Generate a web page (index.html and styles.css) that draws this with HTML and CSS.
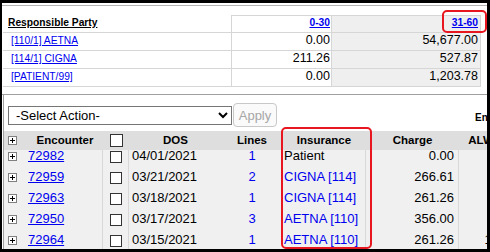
FILE: index.html
```html
<!DOCTYPE html>
<html lang="en">
<head>
  <meta charset="UTF-8">
  <meta name="viewport" content="width=device-width, initial-scale=1.0">
  <title>Encounters - Aging</title>
  <link rel="stylesheet" href="styles.css">
</head>
<body>
  <div class="window">
    <!-- aging summary -->
    <div class="aging">
      <table class="aging-table">
        <colgroup>
          <col class="c-party">
          <col class="c-amt">
          <col class="c-amt2">
        </colgroup>
        <tr>
          <th class="party"><a class="head-link" href="#">Responsible Party</a></th>
          <th class="num"><a class="range" href="#">0-30</a></th>
          <th class="num shade"><a class="range" href="#">31-60</a></th>
        </tr>
        <tr>
          <td class="party"><a href="#">[110/1] AETNA</a></td>
          <td class="num">0.00</td>
          <td class="num shade">54,677.00</td>
        </tr>
        <tr>
          <td class="party"><a href="#">[114/1] CIGNA</a></td>
          <td class="num">211.26</td>
          <td class="num shade">527.87</td>
        </tr>
        <tr>
          <td class="party"><a href="#">[PATIENT/99]</a></td>
          <td class="num">0.00</td>
          <td class="num shade">1,203.78</td>
        </tr>
      </table>
    </div>

    <div class="claims">
      <div class="toolbar">
        <select class="action">
          <option>-Select Action-</option>
        </select>
        <button class="btn" disabled>Apply</button>
        <span class="count">Encounters: 5</span>
      </div>

      <div class="grid">
        <table class="grid-table grid-head">
          <colgroup>
            <col class="g-exp"><col class="g-enc"><col class="g-chk"><col class="g-dos">
            <col class="g-lines"><col class="g-ins"><col class="g-chg"><col class="g-alw">
          </colgroup>
          <tr>
            <th><svg class="plus" width="9" height="9" viewBox="0 0 9 9"><rect x="0.5" y="0.5" width="8" height="8" fill="#fff" stroke="#808080"/><path d="M2 4.5h5M4.5 2v5" stroke="#000"/></svg></th>
            <th>Encounter</th>
            <th><span class="check big"></span></th>
            <th>DOS</th>
            <th>Lines</th>
            <th>Insurance</th>
            <th>Charge</th>
            <th>ALW</th>
          </tr>
        </table>

        <div class="grid-body">
          <table class="grid-table" id="rows">
            <colgroup>
              <col class="g-exp"><col class="g-enc"><col class="g-chk"><col class="g-dos">
              <col class="g-lines"><col class="g-ins"><col class="g-chg"><col class="g-alw">
            </colgroup>
          </table>
        </div>
      </div>
    </div>

    <div class="mark mark-aging"></div>
    <div class="mark mark-ins"></div>
  </div>

  <script>
    const encounters = [
      { id: "72982", dos: "04/01/2021", lines: 1, ins: "Patient", charge: "0.00", alw: "" },
      { id: "72959", dos: "03/21/2021", lines: 2, ins: "CIGNA [114]", charge: "266.61", alw: "" },
      { id: "72963", dos: "03/18/2021", lines: 1, ins: "CIGNA [114]", charge: "261.26", alw: "" },
      { id: "72950", dos: "03/17/2021", lines: 3, ins: "AETNA [110]", charge: "356.00", alw: "" },
      { id: "72964", dos: "03/15/2021", lines: 1, ins: "AETNA [110]", charge: "261.26", alw: "15" },
    ];

    const plus = '<svg class="plus" width="9" height="9" viewBox="0 0 9 9"><rect x="0.5" y="0.5" width="8" height="8" fill="#fff" stroke="#808080"/><path d="M2 4.5h5M4.5 2v5" stroke="#000"/></svg>';
    const rows = document.getElementById('rows');

    encounters.forEach((e) => {
      const tr = document.createElement('tr');
      const ins = e.ins === "Patient" ? e.ins : `<a class="plain" href="#">${e.ins}</a>`;
      tr.innerHTML = `
        <td class="exp">${plus}</td>
        <td class="enc sep"><a href="#">${e.id}</a></td>
        <td class="chk sep"><span class="check"></span></td>
        <td class="dos">${e.dos}</td>
        <td class="lines"><a class="plain" href="#">${e.lines}</a></td>
        <td class="ins sep">${ins}</td>
        <td class="chg sep">${e.charge}</td>
        <td class="alw">${e.alw}</td>
      `;
      rows.appendChild(tr);
    });
  </script>
</body>
</html>
```

FILE: styles.css
```css
body {
  margin: 0;
  padding: 3px 3px 3px 2px;
  background: #000;
  font-family: "Liberation Sans", Arial, sans-serif;
  color: #000;
}

a {
  color: #0000ee;
}

.window {
  position: relative;
  height: 246px;
  background: #fff;
  overflow: hidden;
}

/* aging summary */

.aging {
  margin-top: 2px;
  padding: 9px 0 7px;
  border-top: 1px solid #b4b4b4;
  border-bottom: 1px solid #a0a0a0;
}

.aging-table {
  margin-left: 1px;
  width: 478px;
  border-spacing: 0;
  table-layout: fixed;
}

.c-party { width: 228px; }
.c-amt { width: 100px; }
.c-amt2 { width: 150px; }

.aging-table th,
.aging-table td {
  padding: 0;
  border-bottom: 1px solid #d6d6d6;
  white-space: nowrap;
  font-size: 12.5px;
}

.aging-table th {
  border-top: 1px solid #d6d6d6;
  line-height: 13px;
  padding-bottom: 3px;
}

.aging-table th.party {
  border-top-color: transparent;
  text-align: left;
  padding-left: 5px;
}

.aging-table td {
  line-height: 15px;
  padding-bottom: 2px;
}

.aging-table td.party {
  padding-left: 8px;
  font-size: 10.25px;
}

.head-link,
.range {
  font-size: 10.25px;
  font-weight: bold;
}

.head-link {
  color: #000;
}

.num {
  text-align: right;
  padding-right: 1px !important;
  border-left: 1px solid #d6d6d6;
}

.shade {
  background: #efefef;
  padding-right: 2px !important;
  border-right: 1px solid #d6d6d6;
}

/* encounter list */

.claims {
  margin-left: 1px;
  border-left: 1px solid #a0a0a0;
}

.toolbar {
  display: flex;
  align-items: center;
  padding: 8px 0 4px 4px;
}

.toolbar > * {
  flex: none;
}

.action {
  width: 224px;
  height: 19px;
  padding: 0 0 0 3px;
  border: 1px solid #767676;
  border-radius: 0;
  background: #fff;
  color: #000;
  font-family: "Liberation Sans", Arial, sans-serif;
  font-size: 13px;
}

.btn {
  width: 44px;
  height: 24px;
  margin-left: 1px;
  padding: 0;
  border: 1px solid #c8c8c8;
  border-radius: 4px;
  background: #fafafa;
  color: #a6a6a6;
  font-family: "Liberation Sans", Arial, sans-serif;
  font-size: 13px;
}

.count {
  margin-left: 198px;
  padding-top: 4px;
  font-size: 10px;
  font-weight: bold;
  white-space: nowrap;
}

.grid-table {
  width: 499px;
  border-spacing: 0;
  table-layout: fixed;
}

.g-exp { width: 23px; }
.g-enc { width: 76px; }
.g-chk { width: 26px; }
.g-dos { width: 93px; }
.g-lines { width: 60px; }
.g-ins { width: 84px; }
.g-chg { width: 93px; }
.g-alw { width: 44px; }

.grid-head th {
  height: 19px;
  padding: 0;
  background: #dedede;
  font-size: 11.5px;
  font-weight: bold;
  line-height: 19px;
  text-align: center;
  white-space: nowrap;
}

.grid-head th:first-child {
  text-align: left;
  padding-left: 4px;
}

/* list is scrolled a few pixels under the header */
.grid-body {
  overflow: hidden;
}

.grid-body .grid-table {
  margin-top: -5px;
}

.grid-body td {
  padding: 0;
  background: #f0f0f0;
  font-size: 13px;
  line-height: 21px;
  white-space: nowrap;
}

.grid-body td.sep {
  border-right: 1px solid #d8d8d8;
}

.plus {
  display: inline-block;
  vertical-align: middle;
}

td.exp {
  padding-left: 4px;
}

td.enc {
  padding-left: 1px;
}

td.chk {
  text-align: center;
}

td.dos {
  padding-left: 3px;
}

td.lines {
  text-align: center;
}

td.ins {
  padding-left: 2px;
}

td.chg,
td.alw {
  text-align: right;
  padding-right: 4px;
}

.plain {
  text-decoration: none;
}

.check {
  display: inline-block;
  width: 12px;
  height: 12px;
  box-sizing: border-box;
  border: 1px solid #333;
  background: #fff;
  vertical-align: middle;
}

.check.big {
  width: 13px;
  height: 13px;
}

/* annotation boxes */

.mark {
  position: absolute;
  box-sizing: border-box;
  border: 2.5px solid #e8161e;
  border-radius: 5px;
}

.mark-aging {
  left: 440px;
  top: 7px;
  width: 45px;
  height: 23px;
}

.mark-ins {
  left: 279px;
  top: 124px;
  width: 91px;
  height: 122px;
}
```
